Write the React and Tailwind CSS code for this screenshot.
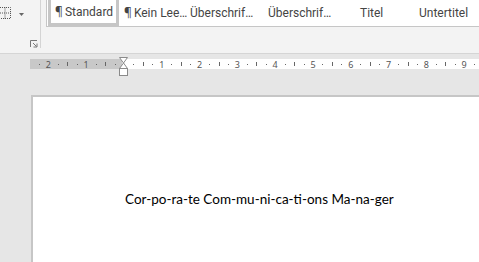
import React from 'react';

const styles = [
  { label: 'Standard', para: true, selected: true, w: 'w-[71px]' },
  { label: 'Kein Lee…', para: true, w: 'w-[66px]' },
  { label: 'Überschrif…', w: 'w-[78px]' },
  { label: 'Überschrif…', w: 'w-[92px]' },
  { label: 'Titel', w: 'w-[59px]' },
  { label: 'Untertitel', w: 'w-[64px]' },
];

const CM = 37.8;
const ZERO = 94; // x of 0 inside ruler svg (ruler starts at x=30)

const Ruler = () => {
  const marks = [];
  for (let q = -10; q <= 40; q++) {
    const x = ZERO + (q * CM) / 4;
    if (x < 0 || x > 449) continue;
    const n = q / 4;
    if (q % 4 === 0) {
      if (n === 0) continue;
      marks.push(
        <text key={q} x={x} y={8.5} textAnchor="middle" fontSize="9" fill="#555" fontFamily="'Noto Sans', sans-serif">
          {Math.abs(n)}
        </text>
      );
    } else if (q % 2 === 0) {
      marks.push(<rect key={q} x={Math.round(x)} y={3} width={1} height={4} fill="#666" />);
    } else {
      marks.push(<rect key={q} x={Math.round(x)} y={5} width={1} height={1} fill="#666" />);
    }
  }
  return (
    <svg width="449" height="10" className="block">
      <rect x="0" y="0" width="92" height="10" fill="#c8c8c8" />
      <rect x="92" y="0" width="357" height="10" fill="#ffffff" />
      {marks}
    </svg>
  );
};

export default function App() {
  return (
    <div className="w-[479px] h-[262px] overflow-hidden flex flex-col bg-[#e6e6e6] font-['Roboto',sans-serif]">
      {/* ribbon */}
      <div className="h-[54px] shrink-0 bg-[#f3f3f3] border-b border-[#d5d5d5] flex">
        <div className="w-[41px] h-[48px] border-r border-[#d4d4d4] relative">
          <svg width="12" height="14" className="absolute left-0 top-[6px]">
            <path d="M0 1.5H10.5V12.5H0M5 1.5V12.5M0 7H10.5" stroke="#555" strokeDasharray="1 1" fill="none" />
          </svg>
          <svg width="6" height="4" className="absolute left-[19px] top-[13px]">
            <path d="M0 0H5L2.5 3Z" fill="#666" />
          </svg>
          <svg width="8" height="8" className="absolute left-[30px] top-[40px]">
            <path d="M0.5 7V0.5H7" stroke="#777" fill="none" />
            <path d="M3 3L6.5 6.5M3.5 7H7V3.5" stroke="#777" fill="none" />
          </svg>
        </div>
        <div className="ml-[5px] flex-1 h-[27px] bg-white border-l border-b border-[#c6c6c6] flex pl-[1px]">
          {styles.map((s, i) => (
            <div
              key={i}
              className={`${s.w} shrink-0 h-full flex items-center text-[12px] text-[#444] whitespace-nowrap ${
                s.selected ? 'border-[3px] border-t-0 border-[#c6c6c6] pl-[4px]' : 'pl-[5px]'
              }`}
            >
              {s.para && <span className="font-['Noto_Sans',sans-serif] text-[#444] mr-[2px]">¶</span>}
              {s.label}
            </div>
          ))}
        </div>
      </div>
      {/* ruler */}
      <div className="mt-[5px] ml-[30px] relative h-[10px]">
        <Ruler />
        <svg width="10" height="21" className="absolute left-[89px] top-[-2px]">
          <path d="M0.5 0.5H8.5L4.5 6L8.5 11.5H0.5L4.5 6Z" fill="#fff" stroke="#8a8a8a" />
          <rect x="0.5" y="11.5" width="8" height="7" fill="#fff" stroke="#8a8a8a" />
        </svg>
      </div>
      {/* page */}
      <div className="mt-[26px] ml-[31px] flex-1 bg-white border-l-2 border-t-2 border-[#c6c6c6]">
        <p className="mt-[93px] ml-[92px] text-[13.5px] leading-[18px] text-black font-['Lato',sans-serif] whitespace-nowrap">
          Cor-po-ra-te Com-mu-ni-ca-ti-ons Ma-na-ger
        </p>
      </div>
    </div>
  );
}
